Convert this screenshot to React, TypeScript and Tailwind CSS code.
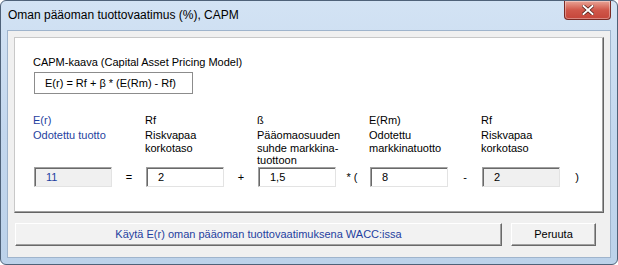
import React from "react";

const font = "font-['Liberation_Sans',Arial,sans-serif]";

interface ColumnProps {
  symbol: string;
  lines: string[];
  blue?: boolean;
}

const Column: React.FC<ColumnProps> = ({ symbol, lines, blue }) => (
  <div className={blue ? "text-[#1f3fa0]" : "text-black"}>
    <div className="leading-[13px]">{symbol}</div>
    <div className="mt-[2px] leading-[12.5px]">
      {lines.map((l, i) => (
        <div key={i}>{l}</div>
      ))}
    </div>
  </div>
);

const Field: React.FC<{ value: string; grey?: boolean; blue?: boolean }> = ({
  value,
  grey,
  blue,
}) => (
  <div
    className={
      "w-[78px] h-[20px] pl-[11px] flex items-center border border-t-[#a0a0a0] border-l-[#a0a0a0] border-r-[#e3e3e3] border-b-[#e3e3e3] shadow-[inset_1px_1px_0_#696969] " +
      (grey ? "bg-[#f0f0f0] " : "bg-white ") +
      (blue ? "text-[#1f3fa0]" : "text-black")
    }
  >
    {value}
  </div>
);

const Op: React.FC<{ children: React.ReactNode }> = ({ children }) => (
  <div className="w-[34px] h-[20px] flex items-center justify-center text-black">
    {children}
  </div>
);

const App: React.FC = () => {
  return (
    <div
      className={
        "w-[618px] h-[265px] rounded-[6px] border border-[#4f6279] bg-gradient-to-b from-[#d3e3f4] via-[#c3d7ee] to-[#bcd2ea] flex flex-col " +
        font
      }
    >
      {/* title bar */}
      <div className="h-[29px] flex justify-between">
        <div className="pl-[7px] pt-[6px] text-[12px] leading-[16px] text-black">
          Oman pääoman tuottovaatimus (%), CAPM
        </div>
        <div className="mr-[6px] w-[47px] h-[19px] rounded-b-[4px] border border-t-0 border-[#7a2a24] bg-gradient-to-b from-[#e8a396] via-[#d0574a] to-[#c5453a] flex items-center justify-center shadow-[inset_0_0_0_1px_rgba(255,255,255,0.35)]">
          <svg width="12" height="10" viewBox="0 0 12 10">
            <path
              d="M1.5 1 L10.5 9 M10.5 1 L1.5 9"
              stroke="#4a1a16"
              strokeWidth="3.4"
              strokeLinecap="square"
            />
            <path
              d="M1.5 1 L10.5 9 M10.5 1 L1.5 9"
              stroke="#ffffff"
              strokeWidth="2"
              strokeLinecap="square"
            />
          </svg>
        </div>
      </div>

      {/* client area */}
      <div className="mx-[6px] h-[228px] bg-[#f0f0f0] border border-[#9fb4cc] px-[6px] pt-[6px] text-[11px]">
        <div className="h-[176px] bg-white border border-t-[#c8c8c8] border-l-[#c8c8c8] border-r-[#646464] border-b-[#646464] shadow-[inset_-1px_-1px_0_#a0a0a0] pl-[18px] pt-[18px]">
          <div className="leading-[13px] text-black">
            CAPM-kaava (Capital Asset Pricing Model)
          </div>
          <div className="mt-[3px] ml-[1px] w-[159px] h-[22px] border border-[#8c8c8c] pl-[10px] flex items-center text-black">
            E(r) = Rf + β * (E(Rm) - Rf)
          </div>

          <div className="mt-[20px] h-[53px] grid grid-cols-[112px_112px_112px_112px_112px]">
            <Column symbol="E(r)" lines={["Odotettu tuotto"]} blue />
            <Column symbol="Rf" lines={["Riskvapaa", "korkotaso"]} />
            <Column
              symbol="ß"
              lines={["Pääomaosuuden", "suhde markkina-", "tuottoon"]}
            />
            <Column symbol="E(Rm)" lines={["Odotettu", "markkinatuotto"]} />
            <Column symbol="Rf" lines={["Riskvapaa", "korkotaso"]} />
          </div>

          <div className="ml-[1px] flex items-center">
            <Field value="11" grey blue />
            <Op>=</Op>
            <Field value="2" />
            <Op>+</Op>
            <Field value="1,5" />
            <Op>
              <span className="pr-[2px]">*&nbsp;(</span>
            </Op>
            <Field value="8" />
            <Op>-</Op>
            <Field value="2" grey />
            <Op>)</Op>
          </div>
        </div>

        {/* buttons */}
        <div className="mt-[10px] flex gap-[9px] pl-[1px]">
          <button className="w-[487px] h-[23px] bg-[#f2f2f2] border border-t-white border-l-white border-r-[#696969] border-b-[#696969] shadow-[inset_-1px_-1px_0_#a0a0a0] text-[#1f3fa0] flex items-center justify-center">
            Käytä E(r) oman pääoman tuottovaatimuksena WACC:issa
          </button>
          <button className="w-[85px] h-[23px] bg-[#f2f2f2] border border-t-white border-l-white border-r-[#696969] border-b-[#696969] shadow-[inset_-1px_-1px_0_#a0a0a0] text-black flex items-center justify-center">
            Peruuta
          </button>
        </div>
      </div>
    </div>
  );
};

export default App;
